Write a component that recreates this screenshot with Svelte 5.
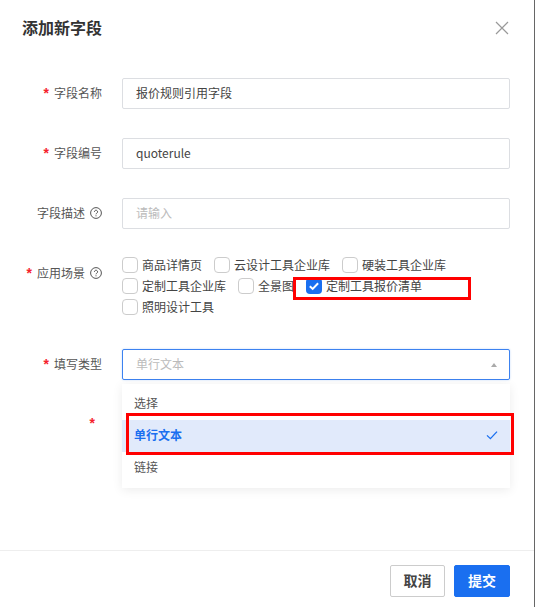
<script>
  const scenes = [
    { label: "商品详情页" },
    { label: "云设计工具企业库" },
    { label: "硬装工具企业库" },
    { label: "定制工具企业库" },
    { label: "全景图" },
    { label: "定制工具报价清单", checked: true },
    { label: "照明设计工具" }
  ];
  const options = [
    { label: "选择" },
    { label: "单行文本", selected: true },
    { label: "链接" }
  ];
</script>

{#snippet help()}
  <svg class="help" width="12" height="12" viewBox="0 0 12 12" fill="none" stroke="#555" stroke-width="1">
    <circle cx="6" cy="6" r="5.4" />
    <path d="M4.4 4.8a1.6 1.6 0 1 1 2.4 1.4c-.5.3-.8.5-.8 1.1" />
    <path d="M6 8.3v1" />
  </svg>
{/snippet}

<div class="modal">
  <header class="head">
    <h1>添加新字段</h1>
    <svg class="close" width="14" height="14" viewBox="0 0 14 14" stroke="#999" stroke-width="1.2" fill="none">
      <path d="M1 1l12 12M13 1L1 13" />
    </svg>
  </header>

  <form class="form">
    <div class="row">
      <span class="label"><i>*</i>字段名称</span>
      <div class="input">报价规则引用字段</div>
    </div>
    <div class="row">
      <span class="label"><i>*</i>字段编号</span>
      <div class="input">quoterule</div>
    </div>
    <div class="row">
      <span class="label">字段描述{@render help()}</span>
      <div class="input placeholder">请输入</div>
    </div>
    <div class="row scenes-row">
      <span class="label"><i>*</i>应用场景{@render help()}</span>
      <div class="scenes">
        {#each scenes as s}
          <span class="check">
            <span class="box" class:on={s.checked}>
              {#if s.checked}
                <svg width="16" height="16" viewBox="0 0 16 16" fill="none" stroke="#fff" stroke-width="2">
                  <path d="M3.8 8.2l2.9 2.7 5.4-5.6" />
                </svg>
              {/if}
            </span>
            <span class="check-text">{s.label}</span>
          </span>
        {/each}
        <span class="mark mark-scene"></span>
      </div>
    </div>
    <div class="row">
      <span class="label"><i>*</i>填写类型</span>
      <div class="select-wrap">
        <div class="input select placeholder">
          单行文本
          <span class="arrow"></span>
        </div>
        <ul class="menu">
          {#each options as o}
            <li class:selected={o.selected}>
              {o.label}
              {#if o.selected}
                <svg width="12" height="12" viewBox="0 0 12 12" fill="none" stroke="#1a6ff0" stroke-width="1.3">
                  <path d="M1 6.4l3.4 3.2L11 2.6" />
                </svg>
              {/if}
            </li>
          {/each}
        </ul>
        <span class="mark mark-option"></span>
      </div>
    </div>
    <div class="row">
      <span class="label empty"><i>*</i></span>
      <div class="blank"></div>
    </div>
  </form>

  <footer class="foot">
    <button type="button" class="btn">取消</button>
    <button type="button" class="btn primary">提交</button>
  </footer>
</div>

<style>
  :global(body) {
    background: #fff;
  }
  .modal {
    box-sizing: border-box;
    width: 535px;
    height: 607px;
    display: flex;
    flex-direction: column;
    background: #fff;
    border-right: 1px solid #666;
    color: #333;
    font-family: "Noto Sans CJK SC", "Noto Sans", sans-serif;
    font-size: 12px;
  }
  .head {
    display: flex;
    align-items: center;
    justify-content: space-between;
    box-sizing: border-box;
    height: 56px;
    padding: 0 24px 0 22px;
  }
  .head h1 {
    margin: -2px 0 0;
    font-size: 16px;
    font-weight: 700;
    color: #333;
  }
  .close {
    margin-right: 1px;
  }
  .form {
    flex: 1;
    display: flex;
    flex-direction: column;
    gap: 29px;
    padding-top: 22px;
  }
  .row {
    display: flex;
    align-items: center;
    gap: 20px;
  }
  .scenes-row {
    align-items: flex-start;
    margin-bottom: 5px;
  }
  .scenes-row .label {
    height: 31px;
  }
  .label {
    flex: none;
    box-sizing: border-box;
    width: 102px;
    display: flex;
    align-items: center;
    justify-content: flex-end;
    padding-bottom: 2px;
    color: #555;
    line-height: 17px;
  }
  .label i {
    font-style: normal;
    color: #f5222d;
    margin-right: 5px;
    font-family: "Liberation Sans", sans-serif;
    font-size: 14px;
    font-weight: 700;
    line-height: 14px;
    height: 14px;
  }
  .label.empty {
    padding: 0 2px 4px 0;
  }
  .help {
    margin-left: 5px;
  }
  .input {
    box-sizing: border-box;
    width: 388px;
    height: 31px;
    display: flex;
    align-items: center;
    padding: 0 13px 2px;
    border: 1px solid #dcdee2;
    border-radius: 2px;
    color: #444;
    background: #fff;
  }
  .placeholder {
    color: #bbb;
  }
  .scenes {
    position: relative;
    width: 388px;
    margin-top: -1px;
    display: flex;
    flex-wrap: wrap;
    gap: 5px 12px;
    line-height: 16px;
  }
  .check {
    display: inline-flex;
    align-items: center;
    gap: 4px;
    color: #444;
  }
  .box {
    box-sizing: border-box;
    width: 16px;
    height: 16px;
    border: 1px solid #ccc;
    border-radius: 4px;
    background: #fff;
  }
  .box.on {
    border: 0;
    background: #1a6ff0;
  }
  .box svg {
    display: block;
  }
  .select-wrap {
    position: relative;
    width: 388px;
  }
  .select {
    position: relative;
    border-color: #3c82f0;
    box-shadow: 0 0 2px rgba(26, 111, 240, 0.3);
  }
  .arrow {
    position: absolute;
    right: 12px;
    top: 13px;
    border: 3.5px solid transparent;
    border-top: 0;
    border-bottom: 4px solid #aaa;
  }
  .menu {
    position: absolute;
    z-index: 2;
    top: 35px;
    left: 0;
    width: 388px;
    margin: 0;
    padding: 4px 0;
    list-style: none;
    background: #fff;
    box-shadow: 0 2px 10px rgba(0, 0, 0, 0.08);
  }
  .menu li {
    box-sizing: border-box;
    height: 32px;
    display: flex;
    align-items: center;
    justify-content: space-between;
    padding: 0 12px 3px;
    color: #555;
  }
  .menu li.selected {
    background: #e1eafb;
    color: #1a6ff0;
    font-weight: 700;
  }
  .mark {
    position: absolute;
    z-index: 3;
    box-sizing: border-box;
    border: 3px solid #f00;
    pointer-events: none;
  }
  .mark-scene {
    left: 171px;
    top: 20px;
    width: 178px;
    height: 23px;
  }
  .mark-option {
    left: 4px;
    top: 64px;
    width: 388px;
    height: 42px;
  }
  .blank {
    height: 31px;
  }
  .foot {
    flex: none;
    height: 57px;
    display: flex;
    justify-content: flex-end;
    align-items: flex-start;
    gap: 9px;
    padding: 14px 24px 0 0;
    border-top: 1px solid #eee;
    box-sizing: border-box;
  }
  .btn {
    width: 55px;
    height: 32px;
    padding: 0 0 2px;
    border: 1px solid #ccc;
    border-radius: 2px;
    background: #fff;
    color: #444;
    font-family: inherit;
    font-size: 14px;
    font-weight: 700;
  }
  .btn.primary {
    width: 56px;
    border-color: #1a6ff0;
    background: #1a6ff0;
    color: #fff;
  }
</style>
